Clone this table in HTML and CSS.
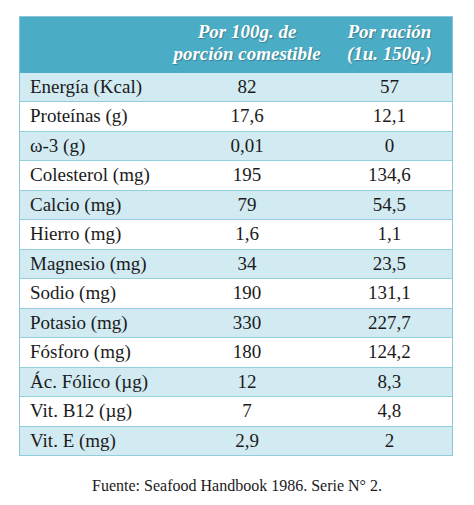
FILE: index.html
```html
<!DOCTYPE html>
<html>
<head>
    <meta charset="UTF-8">
    <title>Tabla nutricional</title>
    <link rel="stylesheet" href="styles.css">
</head>
<body>
    <table class="tabla">
        <colgroup>
            <col class="col-nombre">
            <col class="col-100">
            <col class="col-racion">
        </colgroup>
        <tr class="cabecera">
            <th></th>
            <th>Por 100g. de<br>porción comestible</th>
            <th>Por ración<br>(1u. 150g.)</th>
        </tr>
        <tr class="claro"><td>Energía (Kcal)</td><td>82</td><td>57</td></tr>
        <tr><td>Proteínas (g)</td><td>17,6</td><td>12,1</td></tr>
        <tr class="claro"><td>ω-3 (g)</td><td>0,01</td><td>0</td></tr>
        <tr><td>Colesterol (mg)</td><td>195</td><td>134,6</td></tr>
        <tr class="claro"><td>Calcio (mg)</td><td>79</td><td>54,5</td></tr>
        <tr><td>Hierro (mg)</td><td>1,6</td><td>1,1</td></tr>
        <tr class="claro"><td>Magnesio (mg)</td><td>34</td><td>23,5</td></tr>
        <tr><td>Sodio (mg)</td><td>190</td><td>131,1</td></tr>
        <tr class="claro"><td>Potasio (mg)</td><td>330</td><td>227,7</td></tr>
        <tr><td>Fósforo (mg)</td><td>180</td><td>124,2</td></tr>
        <tr class="claro"><td>Ác. Fólico (µg)</td><td>12</td><td>8,3</td></tr>
        <tr><td>Vit. B12 (µg)</td><td>7</td><td>4,8</td></tr>
        <tr class="claro"><td>Vit. E (mg)</td><td>2,9</td><td>2</td></tr>
    </table>

    <p class="fuente">Fuente: Seafood Handbook 1986. Serie N° 2.</p>
</body>
</html>
```

FILE: styles.css
```css
body {
    margin: 0;
    padding: 16px 0 0 19px;
    background: white;
    color: #1b1b1b;
    font-size: 20px;
}
.tabla {
    width: 434px;
    border-collapse: collapse;
    border: 1px solid #8ac6d6;
}
.tabla td, .tabla th {
    font-family: "Liberation Serif";
    font-size: 19px;
}
.col-nombre { width: 148px; }
.col-100 { width: 160px; }
.col-racion { width: 126px; }
.cabecera {
    background-color: #4bacc6;
    height: 56px;
}
.cabecera th {
    color: white;
    font-style: italic;
    font-weight: bold;
    line-height: 22px;
    padding: 0 0 4px;
    text-shadow: 1px 1px 1px rgba(0, 0, 0, 0.25);
}
td {
    height: 28.5px;
    padding: 0;
    text-align: center;
    border-bottom: 1px solid #93cedc;
}
td:first-child {
    text-align: left;
    padding-left: 10px;
}
.claro {
    background-color: #d2eaf1;
}
.fuente {
    margin: 21px 0 0 -19px;
    text-align: center;
    font-family: "Liberation Serif";
    font-size: 16px;
}
```
